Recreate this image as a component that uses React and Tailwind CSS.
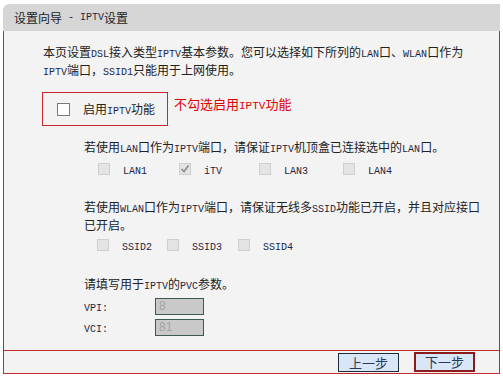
import React from "react";

const CJK = "font-['Noto_Sans_CJK_SC',sans-serif]";

// ASCII runs get a narrow mono face so Latin sits at half the width of a CJK glyph
const Mix = ({ text, latin = "text-[10px]" }) =>
  text.split(/([\x00-\x7F]+)/).map((part, i) =>
    /^[\x00-\x7F]+$/.test(part) ? (
      <span key={i} className={`font-['Liberation_Mono',monospace] text-[#1c2544] whitespace-pre leading-none ${latin}`}>
        {part}
      </span>
    ) : (
      <span key={i} className="leading-none">
        {part}
      </span>
    )
  );

const Line = ({ children, className = "" }) => (
  <div className={`h-[18px] leading-[18px] overflow-visible ${className}`}>{children}</div>
);

const Box = ({ checked, enabled }) => (
  <span
    className={
      enabled
        ? "w-[13px] h-[13px] border border-[#7a7a7a] bg-white shrink-0"
        : "w-[12px] h-[12px] border border-[#cfcfcf] bg-[#e4e4e4] shrink-0 flex items-center justify-center"
    }
  >
    {checked && (
      <svg width="10" height="10" viewBox="0 0 10 10">
        <polyline points="1.5,5 4,7.5 8.5,1.5" fill="none" stroke="#8a8a8a" strokeWidth="1.6" />
      </svg>
    )}
  </span>
);

const Opt = ({ label, checked, w }) => (
  <div className={`flex items-center h-[18px] ${w}`}>
    <Box checked={checked} />
    <span className="ml-[13px] leading-[18px]">
      <Mix text={label} />
    </span>
  </div>
);

const Field = ({ label, value, className = "" }) => (
  <div className={`flex items-center h-[18px] ${className}`}>
    <span className="w-[71px] leading-[18px]">
      <Mix text={label} />
    </span>
    <div className="w-[49px] h-[17px] border border-[#3d5a50] bg-[#c9c9c9] text-[#a3a3a3] font-['Liberation_Sans',sans-serif] text-[12px] leading-[15px] pl-[3px]">
      {value}
    </div>
  </div>
);

export default function App() {
  return (
    <div className={`w-[503px] h-[377px] bg-white pt-[4px] pl-[3px] text-[12px] text-[#222] ${CJK}`}>
      <div className="w-[497px]">
        <div className="h-[27px] bg-[#d6d6d6] rounded-tl-[6px] flex items-center pl-[11px] whitespace-nowrap leading-[18px]">
          <Mix text="设置向导 - IPTV设置" />
        </div>

        <div className="border-x border-b border-[#c5282c] bg-[#f3f3f3]">
          <div className="h-[319px] pt-[12px] pl-[39px] whitespace-nowrap">
            <Line>
              <Mix text="本页设置DSL接入类型IPTV基本参数。您可以选择如下所列的LAN口、WLAN口作为" />
            </Line>
            <Line>
              <Mix text="IPTV端口，SSID1只能用于上网使用。" />
            </Line>

            <div className="flex items-start mt-[13px] ml-[-1px]">
              <div className="w-[126px] h-[34px] border border-[#c5282c] flex items-center pl-[14px]">
                <Box enabled />
                <span className="ml-[13px] leading-[18px]">
                  <Mix text="启用IPTV功能" />
                </span>
              </div>
              <Line className="ml-[6px] mt-[3px] text-[13px] text-[#e00000]">
                <Mix text="不勾选启用" />
                <span className="font-['Liberation_Mono',monospace] text-[11px] leading-none">IPTV</span>
                <span className="leading-none">功能</span>
              </Line>
            </div>

            <div className="ml-[41px]">
              <Line className="mt-[12px]">
                <Mix text="若使用LAN口作为IPTV端口，请保证IPTV机顶盒已连接选中的LAN口。" />
              </Line>
              <div className="flex h-[18px] mt-[4px] pl-[14px]">
                <Opt label="LAN1" w="w-[81px]" />
                <Opt label="iTV" checked w="w-[80px]" />
                <Opt label="LAN3" w="w-[84px]" />
                <Opt label="LAN4" w="w-[80px]" />
              </div>

              <Line className="mt-[20px]">
                <Mix text="若使用WLAN口作为IPTV端口，请保证无线多SSID功能已开启，并且对应接口" />
              </Line>
              <Line>已开启。</Line>
              <div className="flex h-[18px] mt-[2px] pl-[13px]">
                <Opt label="SSID2" w="w-[70px]" />
                <Opt label="SSID3" w="w-[71px]" />
                <Opt label="SSID4" w="w-[70px]" />
              </div>

              <Line className="mt-[21px]">
                <Mix text="请填写用于IPTV的PVC参数。" />
              </Line>
              <Field label="VPI:" value="8" className="mt-[4px]" />
              <Field label="VCI:" value="81" className="mt-[3px]" />
            </div>
          </div>

          <div className="h-[23px] border-t border-[#c5282c] flex items-center justify-end pr-[24px]">
            <button className="w-[61px] h-[19px] border border-[#1c2c3c] bg-[#d8e6f8] text-[13px] leading-[17px] text-[#243a5e] mr-[15px]">
              上一步
            </button>
            <button className="w-[61px] h-[20px] border-2 border-[#8b1a1a] bg-[#d8e6f8] text-[13px] leading-[16px] text-[#243a5e]">
              下一步
            </button>
          </div>
        </div>
      </div>
    </div>
  );
}
